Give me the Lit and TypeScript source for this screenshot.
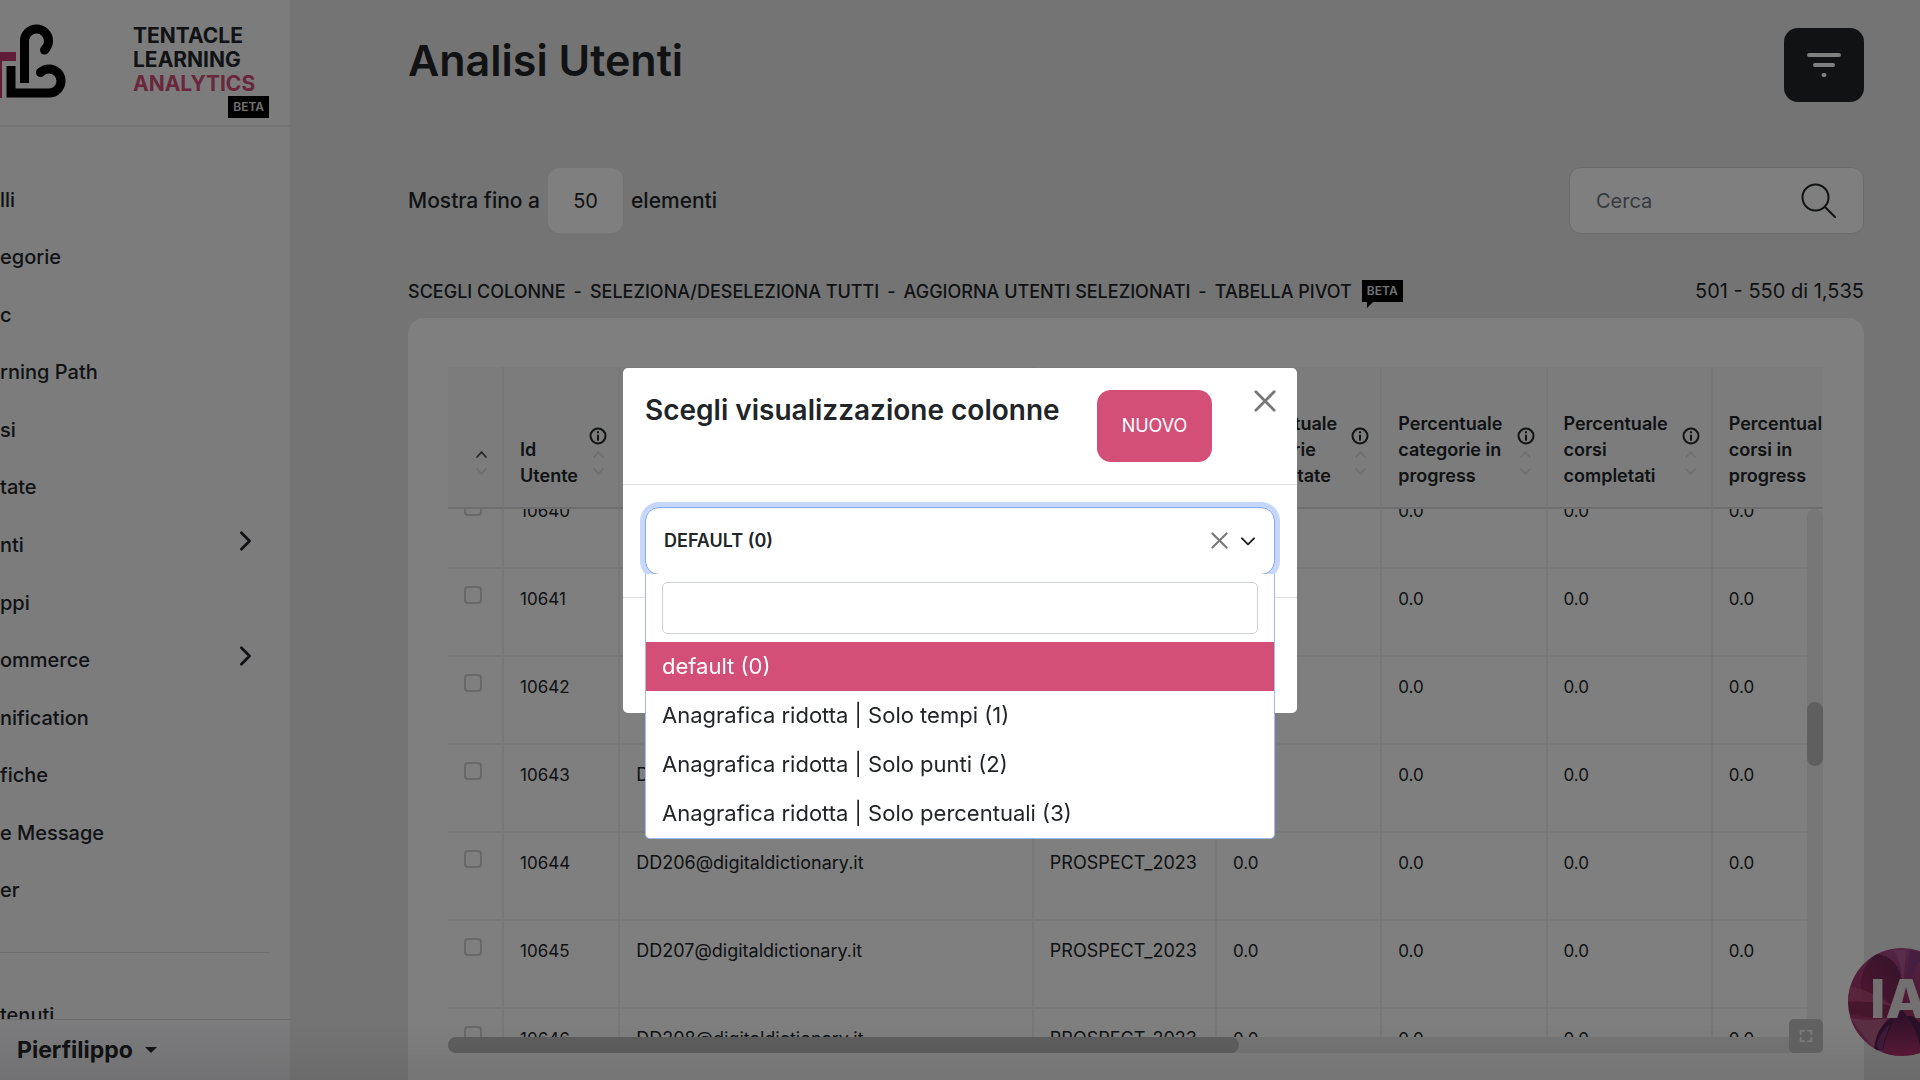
import { LitElement, html, css, svg, nothing } from "lit";
import { customElement, query, state } from "lit/decorators.js";
import { classMap } from "lit/directives/class-map.js";

interface NavItem {
  label: string;
  children?: boolean;
}

interface Column {
  label: string;
  kind: string;
}

const NAV: NavItem[] = [
  { label: "lli" },
  { label: "egorie" },
  { label: "c" },
  { label: "rning Path" },
  { label: "si" },
  { label: "tate" },
  { label: "nti", children: true },
  { label: "ppi" },
  { label: "ommerce", children: true },
  { label: "nification" },
  { label: "fiche" },
  { label: "e Message" },
  { label: "er" },
];

const COLUMNS: Column[] = [
  { label: "Id Utente", kind: "id" },
  { label: "", kind: "mail" },
  { label: "", kind: "group" },
  { label: "Percentuale categorie completate", kind: "num" },
  { label: "Percentuale categorie in progress", kind: "num" },
  { label: "Percentuale corsi completati", kind: "num" },
  { label: "Percentuale corsi in progress", kind: "num" },
];

const ROWS = [10640, 10641, 10642, 10643, 10644, 10645, 10646, 10647].map((id) => ({
  id,
  mail: `DD${id - 10438}@digitaldictionary.it`,
  group: "PROSPECT_2023",
}));

const VIEWS = [
  "default (0)",
  "Anagrafica ridotta | Solo tempi (1)",
  "Anagrafica ridotta | Solo punti (2)",
  "Anagrafica ridotta | Solo percentuali (3)",
];

const line = (d: string, size: number, width: number, cls = "") => html`
  <svg class="line ${cls}" width=${size} height=${size} viewBox="0 0 24 24" stroke-width=${width} aria-hidden="true">
    ${svg`<path d=${d} />`}
  </svg>
`;

@customElement("app-root")
export class AppRoot extends LitElement {
  static styles = css`
    :host {
      display: block;
      font-family: Inter, "Open Sans", sans-serif;
      color: #212529;
      font-size: 17px;
    }
    * {
      box-sizing: border-box;
    }
    button,
    input,
    select {
      font: inherit;
      color: inherit;
    }
    button {
      border: 0;
      background: none;
      padding: 0;
      cursor: pointer;
    }
    a {
      color: inherit;
      text-decoration: none;
    }
    h1,
    h2,
    ul {
      margin: 0;
      padding: 0;
      list-style: none;
    }
    .line {
      fill: none;
      stroke: currentColor;
      stroke-linecap: round;
      stroke-linejoin: round;
      display: block;
    }
    .page {
      display: flex;
      height: 100vh;
      background: #e9e9e9;
      overflow: hidden;
      position: relative;
    }

    .sidebar {
      display: flex;
      flex-direction: column;
      width: 290px;
      flex: none;
      background: #f8f8fb;
    }
    .brand {
      display: flex;
      justify-content: space-between;
      height: 127px;
      flex: none;
      border-bottom: 2px solid #ebebed;
      padding: 24px 21px 0 0;
    }
    .brand-text {
      display: flex;
      flex-direction: column;
      width: 136px;
      font-size: 21px;
      line-height: 24px;
      font-weight: 700;
    }
    .accent {
      color: #d44f77;
    }
    .badge {
      background: #000;
      color: #e4e4e4;
      font-size: 12px;
      line-height: 22px;
      font-weight: 600;
      padding: 0 5px;
    }
    .brand-text .badge {
      align-self: flex-end;
    }
    .nav {
      flex: 1;
      min-height: 0;
      margin-top: 44px;
      display: grid;
      grid-auto-rows: 1fr;
    }
    .nav-link {
      display: flex;
      align-items: center;
      justify-content: space-between;
      height: 100%;
      padding-right: 34px;
      font-size: 20px;
      font-weight: 500;
    }
    .nav-link .line {
      margin-bottom: 8px;
    }
    .more {
      height: 100px;
      flex: none;
      overflow: hidden;
      display: flex;
      flex-direction: column;
      gap: 50px;
      padding-top: 33px;
      font-size: 20px;
      font-weight: 500;
    }
    .rule {
      width: 269px;
      border: 0;
      border-top: 1px solid #dadadc;
      margin: 0;
    }
    .user {
      display: flex;
      align-items: center;
      gap: 12px;
      height: 61px;
      flex: none;
      border-top: 1px solid #dadadc;
      padding-left: 17px;
      font-size: 23px;
      font-weight: 700;
    }
    .caret {
      border: 6px solid transparent;
      border-top-color: currentColor;
      border-bottom: 0;
    }

    .main {
      display: flex;
      flex-direction: column;
      flex: 1;
      min-width: 0;
      padding: 28px 56px 0 118px;
    }
    .row {
      display: flex;
      align-items: center;
      justify-content: space-between;
    }
    h1 {
      font-size: 43px;
      line-height: 64px;
      font-weight: 600;
    }
    .head {
      align-items: flex-start;
    }
    .filter {
      display: grid;
      place-items: center;
      width: 80px;
      height: 74px;
      border-radius: 14px;
      background: #212529;
      color: #fff;
    }
    .controls {
      margin-top: 65px;
      font-size: 20px;
      font-weight: 500;
    }
    .length {
      display: flex;
      align-items: center;
      gap: 8px;
      font-size: 21px;
    }
    .length select {
      appearance: none;
      width: 75px;
      height: 65px;
      border: 0;
      border-radius: 12px;
      background: #fff;
      text-align: center;
      text-align-last: center;
      font-size: 20px;
      font-weight: 400;
    }
    .search {
      display: flex;
      align-items: center;
      width: 295px;
      height: 67px;
      padding: 0 26px;
      border: 1px solid #d6d6d6;
      border-radius: 12px;
      background: #fff;
    }
    .search input {
      flex: 1;
      min-width: 0;
      border: 0;
      padding: 0;
      background: none;
      outline: none;
      font-weight: 400;
    }
    .search input::placeholder {
      color: #6c757d;
    }
    .tools {
      margin-top: 40px;
      height: 34px;
    }
    .links {
      display: flex;
      align-items: center;
      gap: 8px;
      font-size: 18px;
      font-weight: 500;
    }
    .bubble {
      position: relative;
      margin-left: 2px;
    }
    .bubble::after {
      content: "";
      position: absolute;
      left: 5px;
      top: 100%;
      border-top: 6px solid #000;
      border-right: 6px solid transparent;
    }
    .count {
      font-size: 20px;
    }

    .card {
      display: flex;
      flex-direction: column;
      flex: 1;
      min-height: 0;
      margin-top: 10px;
      padding: 49px 41px 27px 40px;
      border-radius: 16px 16px 0 0;
      background: #fff;
    }
    .viewport {
      position: relative;
      display: flex;
      flex: 1;
      min-height: 0;
    }
    .scroller {
      flex: 1;
      min-width: 0;
      overflow: auto;
      scrollbar-width: none;
    }
    table {
      table-layout: fixed;
      width: 100%;
      min-width: 1430px;
      border-spacing: 0;
    }
    .c-check {
      width: 56px;
    }
    .c-id {
      width: 116px;
    }
    .c-mail {
      width: 413px;
    }
    .c-group {
      width: 183px;
    }
    .c-num {
      width: 165px;
    }
    th,
    td {
      padding: 0 0 0 16px;
      text-align: left;
      border-right: 2px solid #f1f1f1;
      border-bottom: 2px solid #f1f1f1;
    }
    th {
      position: sticky;
      top: 0;
      z-index: 1;
      height: 142px;
      padding-bottom: 18px;
      vertical-align: bottom;
      background: #f8f8f8;
      border-right-color: #eee;
      border-bottom-color: #dcdcdc;
      font-size: 18px;
      line-height: 26px;
      font-weight: 600;
    }
    td {
      height: 88px;
      padding-top: 17px;
      vertical-align: top;
      line-height: 26px;
    }
    .text {
      font-size: 18px;
    }
    .th {
      display: flex;
      align-items: flex-end;
      justify-content: space-between;
      padding-right: 11px;
    }
    .sort {
      display: flex;
      flex-direction: column;
      align-items: center;
      gap: 2px;
      width: 18px;
      flex: none;
      margin-bottom: 10px;
    }
    .dim {
      color: #dedede;
    }
    .asc {
      color: #555;
    }
    .check {
      padding-left: 16px;
    }
    th.check {
      padding-left: 24px;
    }
    .check input {
      appearance: none;
      display: block;
      width: 18px;
      height: 18px;
      margin: 0;
      border: 2px solid #d0d0d0;
      border-radius: 4px;
      background: #fff;
    }
    .vbar {
      position: absolute;
      top: 142px;
      right: 0;
      bottom: 0;
      width: 16px;
      padding-top: 193px;
      border-radius: 8px 8px 0 0;
      background: #eee;
    }
    .vthumb {
      height: 64px;
      border-radius: 8px;
      background: #bfbfbf;
    }
    .hbar {
      position: relative;
      height: 16px;
      flex: none;
      border-radius: 8px;
      background: #ebebeb;
    }
    .hthumb {
      width: 57.5%;
      height: 16px;
      border-radius: 8px;
      background: #bebebe;
    }
    .expand {
      position: absolute;
      right: 0;
      bottom: 0;
      z-index: 2;
      display: grid;
      place-items: center;
      width: 34px;
      height: 34px;
      border-radius: 5px;
      background: #c2c2c2;
      color: #f4f4f4;
    }

    .assistant {
      position: absolute;
      right: -36px;
      bottom: 24px;
      width: 108px;
      height: 108px;
      border-radius: 50%;
      overflow: hidden;
    }
    .assistant svg {
      display: block;
    }
    .assistant span {
      position: absolute;
      left: 22px;
      top: 21px;
      font-size: 54px;
      line-height: 60px;
      font-weight: 800;
      color: #e6e0e4;
    }
    .shade {
      position: absolute;
      left: 0;
      right: 0;
      bottom: 0;
      height: 60px;
      background: linear-gradient(transparent, rgba(0, 0, 0, 0.08));
      pointer-events: none;
    }

    .backdrop {
      position: fixed;
      inset: 0;
      z-index: 5;
      display: flex;
      align-items: center;
      justify-content: center;
      background: rgba(0, 0, 0, 0.5);
    }
    .modal {
      width: 674px;
      max-width: 96vw;
      border-radius: 5px;
      background: #fff;
    }
    .modal-head {
      display: flex;
      align-items: flex-start;
      padding: 22px 21px 22px 22px;
      border-bottom: 1px solid #dee2e6;
    }
    h2 {
      flex: 1;
      font-size: 28px;
      line-height: 40px;
      font-weight: 600;
    }
    .new {
      width: 115px;
      height: 72px;
      margin-right: 42px;
      border-radius: 14px;
      background: #d44f77;
      color: #fff;
      font-size: 18px;
    }
    .close {
      color: #777;
    }
    .modal-body {
      padding: 22px;
      border-bottom: 1px solid #dee2e6;
    }
    .modal-foot {
      height: 115px;
    }
    .picker {
      position: relative;
    }
    .picker select {
      appearance: none;
      display: block;
      width: 100%;
      height: 68px;
      padding: 0 18px;
      border: 1px solid #86a9f0;
      border-radius: 14px;
      outline: none;
      box-shadow: 0 0 0 5px #c7d7fb;
      background: #fff;
      font-size: 18px;
      font-weight: 600;
      text-transform: uppercase;
    }
    .picker-icons {
      position: absolute;
      top: 0;
      right: 19px;
      height: 68px;
      display: flex;
      align-items: center;
      gap: 12px;
      pointer-events: none;
    }
    .picker-icons button {
      color: #777;
      pointer-events: auto;
    }
    .panel {
      position: absolute;
      top: 67px;
      left: 0;
      right: 0;
      z-index: 6;
      border: 1px solid #9dbcf8;
      border-top: 0;
      border-radius: 0 0 5px 5px;
      background: #fff;
    }
    .lookup {
      padding: 8px 16px;
    }
    .lookup input {
      display: block;
      width: 100%;
      height: 52px;
      padding: 0 12px;
      border: 1px solid #ced4da;
      border-radius: 5px;
      outline: none;
    }
    .option {
      display: block;
      width: 100%;
      padding: 0 16px;
      text-align: left;
      font-size: 22px;
      line-height: 49px;
    }
    .option.on {
      background: #d44f77;
      color: #fff;
    }
  `;

  @state() private view = 0;
  @query(".scroller") private scroller!: HTMLElement;

  firstUpdated() {
    this.scroller.scrollTop = 28;
  }

  private sorter(asc = false) {
    return html`
      ${line("M5 16l7-8 7 8", 15, 3, asc ? "asc" : "dim")} ${line("M5 8l7 8 7-8", 15, 3, "dim")}
    `;
  }

  private renderSidebar() {
    return html`
      <aside class="sidebar">
        <div class="brand">
          <svg width="68" height="76" viewBox="0 24 68 76" fill="none" stroke="#000" stroke-width="9" aria-hidden="true">
            <path d="M0 56.5H16M-2.5 52V98" stroke="#c03a6c" />
            <path d="M11 66V93H49A12 12 0 0 0 49 69Q44 69 40.500 72.500" />
            <path d="M24.500 83V41A12 12 0 0 1 48.500 41Q48.500 46 44.500 50" />
            <circle cx="40.500" cy="72.500" r="4.500" fill="#000" stroke="none" />
            <circle cx="44.500" cy="50" r="4.500" fill="#000" stroke="none" />
          </svg>
          <div class="brand-text">
            <span>TENTACLE</span>
            <span>LEARNING</span>
            <span class="accent">ANALYTICS</span>
            <span class="badge">BETA</span>
          </div>
        </div>
        <ul class="nav">
          ${NAV.map(
            (item) => html`<li>
              <a class="nav-link" href="#">
                <span>${item.label}</span>
                ${item.children ? line("M8 3l9 9-9 9", 22, 3) : nothing}
              </a>
            </li>`,
          )}
        </ul>
        <div class="more">
          <hr class="rule" />
          <a href="#">tenuti</a>
        </div>
        <button class="user"><span>Pierfilippo</span><span class="caret"></span></button>
      </aside>
    `;
  }

  private renderTable() {
    return html`
      <section class="card">
        <div class="viewport">
          <div class="scroller">
            <table>
              <colgroup>
                <col class="c-check" />
                ${COLUMNS.map((c) => html`<col class="c-${c.kind}" />`)}
              </colgroup>
              <thead>
                <tr>
                  <th class="check"><div class="sort">${this.sorter(true)}</div></th>
                  ${COLUMNS.map(
                    (c) => html`<th>
                      <div class="th">
                        <span>${c.label}</span>
                        <span class="sort">
                          <svg class="line" width="18" height="18" viewBox="0 0 18 18" stroke-width="2" aria-hidden="true">
                            <circle cx="9" cy="9" r="7.500" />
                            <path d="M9 8.500V13M9 5V5.500" />
                          </svg>
                          ${this.sorter()}
                        </span>
                      </div>
                    </th>`,
                  )}
                </tr>
              </thead>
              <tbody>
                ${ROWS.map(
                  (r) => html`<tr>
                    <td class="check"><input type="checkbox" aria-label="Utente ${r.id}" /></td>
                    <td>${r.id}</td>
                    <td class="text">${r.mail}</td>
                    <td class="text">${r.group}</td>
                    <td>0.0</td>
                    <td>0.0</td>
                    <td>0.0</td>
                    <td>0.0</td>
                  </tr>`,
                )}
              </tbody>
            </table>
          </div>
          <div class="vbar"><div class="vthumb"></div></div>
        </div>
        <div class="hbar">
          <div class="hthumb"></div>
          <button class="expand" aria-label="Schermo intero">
            ${line("M4 9V4h5M15 4h5v5M20 15v5h-5M9 20H4v-5", 16, 3)}
          </button>
        </div>
      </section>
    `;
  }

  private renderModal() {
    return html`
      <div class="backdrop">
        <div class="modal" role="dialog" aria-labelledby="modal-title">
          <div class="modal-head">
            <h2 id="modal-title">Scegli visualizzazione colonne</h2>
            <button class="new">NUOVO</button>
            <button class="close" aria-label="Chiudi">${line("M2 2l20 20M22 2L2 22", 22, 3)}</button>
          </div>
          <div class="modal-body">
            <div class="picker">
              <select
                aria-label="Visualizzazione"
                @change=${(e: Event) => (this.view = (e.target as HTMLSelectElement).selectedIndex)}
              >
                ${VIEWS.map((v, i) => html`<option ?selected=${i === this.view}>${v}</option>`)}
              </select>
              <div class="picker-icons">
                <button aria-label="Rimuovi">${line("M2 2l20 20M22 2L2 22", 17, 3)}</button>
                ${line("M3 8l9 9 9-9", 16, 3)}
              </div>
              <div class="panel">
                <div class="lookup"><input type="text" aria-label="Filtra" /></div>
                ${VIEWS.map(
                  (v, i) => html`<button
                    class=${classMap({ option: true, on: i === this.view })}
                    @click=${() => (this.view = i)}
                  >
                    ${v}
                  </button>`,
                )}
              </div>
            </div>
          </div>
          <div class="modal-foot"></div>
        </div>
      </div>
    `;
  }

  render() {
    return html`
      <div class="page">
        ${this.renderSidebar()}
        <main class="main">
          <div class="row head">
            <h1>Analisi Utenti</h1>
            <button class="filter" aria-label="Filtri">
              <svg class="line" width="36" height="26" viewBox="0 0 36 26" stroke-width="4" aria-hidden="true">
                <path d="M3 3H33M9 13H27M17.500 23H18.500" />
              </svg>
            </button>
          </div>
          <div class="row controls">
            <div class="length">
              <label for="len">Mostra fino a</label>
              <select id="len">
                <option>50</option>
              </select>
              <span>elementi</span>
            </div>
            <div class="search">
              <input type="search" placeholder="Cerca" aria-label="Cerca" />
              <svg class="line" width="36" height="36" viewBox="0 0 36 36" stroke-width="2" aria-hidden="true">
                <circle cx="14.500" cy="14.500" r="13" />
                <path d="M24 24L34 34" />
              </svg>
            </div>
          </div>
          <div class="row tools">
            <div class="links">
              <a href="#">SCEGLI COLONNE</a><span>-</span> <a href="#">SELEZIONA/DESELEZIONA TUTTI</a><span>-</span>
              <a href="#">AGGIORNA UTENTI SELEZIONATI</a><span>-</span> <a href="#">TABELLA PIVOT</a>
              <span class="badge bubble">BETA</span>
            </div>
            <span class="count">501 - 550 di 1,535</span>
          </div>
          ${this.renderTable()}
        </main>
        <div class="shade"></div>
        <button class="assistant" aria-label="Assistente IA">
          <svg width="108" height="108" viewBox="0 0 108 108" aria-hidden="true">
            <defs>
              <linearGradient id="base" x1="0" y1="0" x2="0" y2="1">
                <stop offset="0" stop-color="#a84a88" />
                <stop offset="0.5" stop-color="#9c3062" />
                <stop offset="1" stop-color="#a8507c" />
              </linearGradient>
              <linearGradient id="petal" x1="0" y1="1" x2="1" y2="0">
                <stop offset="0" stop-color="#a02c5c" />
                <stop offset="1" stop-color="#662858" />
              </linearGradient>
              <linearGradient id="low" x1="0" y1="0" x2="0" y2="1">
                <stop offset="0" stop-color="#54204c" />
                <stop offset="1" stop-color="#b0306c" />
              </linearGradient>
            </defs>
            <rect width="108" height="108" fill="url(#base)" />
            <path d="M14 52Q8 22 28 6Q50 8 54 34Q54 50 46 62Z" fill="url(#petal)" />
            <path d="M46 2Q56 20 54 48L58 2Z" fill="#b868a4" opacity="0.6" />
            <path d="M62 2Q58 20 58 44Q66 20 76 6Z" fill="#8c3c80" />
            <path d="M0 38Q24 42 48 60Q22 52 0 54Z" fill="#bc5480" opacity="0.7" />
            <path d="M0 54Q26 52 48 60L40 70Q20 70 2 66Z" fill="#8c2c58" />
            <path d="M2 70Q24 74 40 70Q28 84 26 100Z" fill="#b8648c" opacity="0.8" />
            <path d="M26 102Q28 78 46 68H64Q82 80 84 102Z" fill="#54204c" />
            <path d="M34 108Q38 80 54 62Q70 80 74 108Z" fill="url(#low)" />
            <path d="M28 98Q32 84 42 76Q36 92 34 104Z" fill="#7c3470" />
          </svg>
          <span>IA</span>
        </button>
        ${this.renderModal()}
      </div>
    `;
  }
}
